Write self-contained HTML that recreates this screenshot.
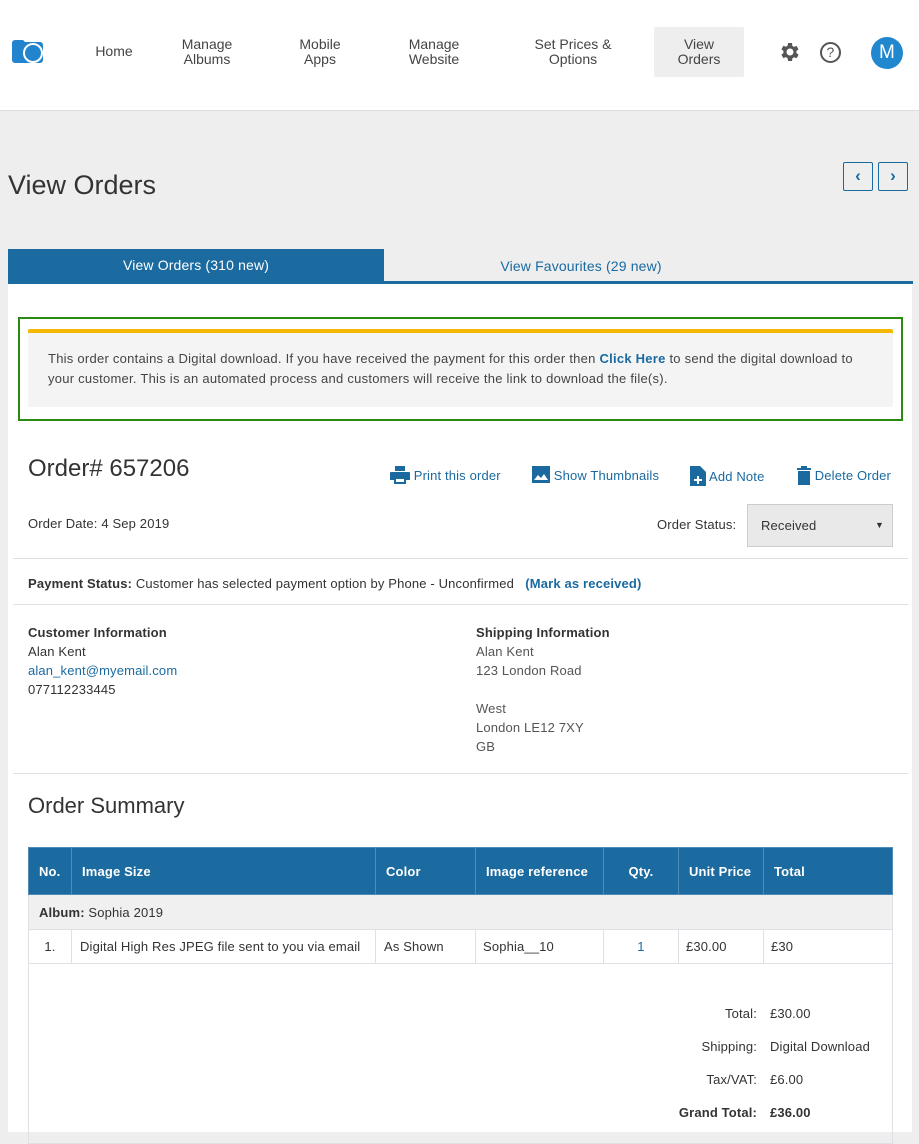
<!DOCTYPE html>
<html><head><meta charset="utf-8">
<style>
*{box-sizing:border-box;margin:0;padding:0}
body{width:919px;height:1132px;overflow:hidden;background:#eeeeee;font-family:"Liberation Sans",sans-serif;color:#333;font-size:13px;position:relative;letter-spacing:0.15px}
.a{position:absolute}
.hdr{left:0;top:0;width:919px;height:111px;background:#fff;border-bottom:1px solid #ddd}
.nav{font-size:14px;color:#444;text-align:center;line-height:15px;letter-spacing:0}
.blue{color:#1a6aa0}
.line{height:1px;background:#e0e0e0;left:13px;width:895px}
table{border-collapse:collapse}
td,th{border:1px solid #dde1e6;font-size:13px;text-align:left;padding:0 10px}
th{background:#1b6aa0;color:#fff;font-weight:bold;border-color:#4f8cb8}
</style></head><body>
<div class="a hdr">
  <svg class="a" style="left:12px;top:38px" width="32" height="26" viewBox="0 0 32 26"><path d="M3 2h8l2 2h15a3 3 0 0 1 3 3v15a3 3 0 0 1-3 3H3a3 3 0 0 1-3-3V5a3 3 0 0 1 3-3z" fill="#2184cd"/><circle cx="21" cy="15" r="9" fill="#2184cd" stroke="#fff" stroke-width="2"/></svg>
  <div class="a nav" style="left:86px;top:44px;width:56px">Home</div>
  <div class="a nav" style="left:170px;top:37px;width:74px">Manage<br>Albums</div>
  <div class="a nav" style="left:285px;top:37px;width:70px">Mobile<br>Apps</div>
  <div class="a nav" style="left:396px;top:37px;width:76px">Manage<br>Website</div>
  <div class="a nav" style="left:520px;top:37px;width:106px">Set Prices &amp;<br>Options</div>
  <div class="a nav" style="left:654px;top:27px;width:90px;height:50px;background:#eee;border-radius:2px;padding-top:10px">View<br>Orders</div>
  <svg class="a" style="left:777px;top:40px" width="24" height="24" viewBox="0 0 24 24"><path fill="#555" d="M19.4 13a7.5 7.5 0 0 0 0-2l2.1-1.6-2-3.5-2.5 1a7 7 0 0 0-1.7-1L15 3h-4l-.4 2.7a7 7 0 0 0-1.7 1l-2.5-1-2 3.5L6.5 11a7.5 7.5 0 0 0 0 2l-2.1 1.6 2 3.5 2.5-1a7 7 0 0 0 1.7 1L11 21h4l.4-2.7a7 7 0 0 0 1.7-1l2.5 1 2-3.5zM13 15.5a3.5 3.5 0 1 1 0-7 3.5 3.5 0 0 1 0 7z"/></svg>
  <div class="a" style="left:820px;top:42px;width:21px;height:21px;border:2px solid #555;border-radius:50%;text-align:center;font-size:14px;line-height:17px;color:#555">?</div>
  <div class="a" style="left:871px;top:37px;width:32px;height:32px;border-radius:50%;background:#2187cf;color:#fff;text-align:center;line-height:32px;font-size:19px">M</div>
</div>
<div class="a" style="left:8px;top:170px;font-size:27px;color:#333;letter-spacing:0">View Orders</div>
<div class="a" style="left:843px;top:162px;width:30px;height:29px;border:1px solid #1a6aa0;border-radius:2px;text-align:center;line-height:26px;color:#1a6aa0;font-size:17px;font-weight:bold">‹</div>
<div class="a" style="left:878px;top:162px;width:30px;height:29px;border:1px solid #1a6aa0;border-radius:2px;text-align:center;line-height:26px;color:#1a6aa0;font-size:17px;font-weight:bold">›</div>
<div class="a" style="left:8px;top:249px;width:376px;height:32px;background:#1b6aa0;color:#fff;text-align:center;line-height:33px;font-size:14px">View Orders (310 new)</div>
<div class="a blue" style="left:384px;top:249px;width:394px;height:32px;text-align:center;line-height:34px;font-size:14px">View Favourites (29 new)</div>
<div class="a" style="left:8px;top:281px;width:905px;height:3px;background:#1b6aa0"></div>
<div class="a" style="left:8px;top:284px;width:904px;height:848px;background:#fff"></div>
<div class="a" style="left:18px;top:317px;width:885px;height:104px;border:2px solid #2a8a12"></div>
<div class="a" style="left:28px;top:329px;width:865px;height:78px;background:#f4f4f4;border-top:4px solid #f5b800;border-radius:2px;padding:16px 20px;line-height:20px;font-size:13px;color:#444;letter-spacing:0.25px">This order contains a Digital download. If you have received the payment for this order then <b class="blue">Click Here</b> to send the digital download to your customer. This is an automated process and customers will receive the link to download the file(s).</div>
<div class="a" style="left:28px;top:455px;font-size:24px;color:#333;letter-spacing:0">Order# 657206</div>
<div class="a blue" style="left:390px;top:466px;font-size:13px"><svg width="20" height="18" viewBox="0 0 20 18" style="vertical-align:-4px"><path fill="#1a6aa0" d="M5 0h10v5H5zM1 6h18a1 1 0 0 1 1 1v7h-4v4H4v-4H0V7a1 1 0 0 1 1-1zm5 7v3h8v-3z"/></svg> Print this order</div>
<div class="a blue" style="left:532px;top:466px;font-size:13px"><svg width="18" height="17" viewBox="0 0 18 17" style="vertical-align:-3px"><rect width="18" height="17" fill="#1a6aa0"/><path fill="#fff" d="M2 14l4-5 3 3 3-4 4 6z"/></svg> Show Thumbnails</div>
<div class="a blue" style="left:690px;top:466px;font-size:13px"><svg width="16" height="20" viewBox="0 0 16 20" style="vertical-align:-5px"><path fill="#1a6aa0" d="M0 0h10l6 6v14H0z"/><path fill="#fff" d="M7 10h2v3h3v2H9v3H7v-3H4v-2h3z"/></svg> Add Note</div>
<div class="a blue" style="left:797px;top:466px;font-size:13px"><svg width="14" height="19" viewBox="0 0 14 19" style="vertical-align:-5px"><path fill="#1a6aa0" d="M4 0h6v2h4v2H0V2h4zM1 5h12v14H1z"/></svg> Delete Order</div>
<div class="a" style="left:28px;top:516px">Order Date: 4 Sep 2019</div>
<div class="a" style="left:657px;top:517px">Order Status:</div>
<div class="a" style="left:747px;top:504px;width:146px;height:43px;background:#e9e9e9;border:1px solid #ccc;padding-left:13px;line-height:41px">Received<span style="position:absolute;right:8px;font-size:9px">▼</span></div>
<div class="a line" style="top:558px"></div>
<div class="a" style="left:28px;top:576px;letter-spacing:0.15px"><b>Payment Status:</b> Customer has selected payment option by Phone - Unconfirmed &nbsp;&nbsp;<b class="blue">(Mark as received)</b></div>
<div class="a line" style="top:604px"></div>
<div class="a" style="left:28px;top:623px;line-height:19px"><b>Customer Information</b><br>Alan Kent<br><span class="blue">alan_kent@myemail.com</span><br>077112233445</div>
<div class="a" style="left:476px;top:623px;line-height:19px;color:#555"><b style="color:#333">Shipping Information</b><br>Alan Kent<br>123 London Road<br><br>West<br>London LE12 7XY<br>GB</div>
<div class="a line" style="top:773px"></div>
<div class="a" style="left:28px;top:793px;font-size:22px;letter-spacing:0">Order Summary</div>
<table class="a" style="left:28px;top:847px;width:865px">
<tr style="height:47px"><th style="width:43px">No.</th><th style="width:304px">Image Size</th><th style="width:100px">Color</th><th style="width:128px">Image reference</th><th style="width:75px;text-align:center">Qty.</th><th style="width:85px">Unit Price</th><th>Total</th></tr>
<tr style="height:35px;background:#f0f0f0"><td colspan="7"><b>Album:</b> Sophia 2019</td></tr>
<tr style="height:34px"><td style="text-align:center">1.</td><td style="padding-left:8px">Digital High Res JPEG file sent to you via email</td><td style="padding-left:8px">As Shown</td><td style="padding-left:7px">Sophia__10</td><td style="text-align:center" class="blue">1</td><td style="padding-left:7px">£30.00</td><td style="padding-left:7px">£30</td></tr>
<tr style="height:180px"><td colspan="7" style="vertical-align:top;padding:0"></td></tr>
</table>
<div class="a" style="left:600px;top:997px;width:157px;text-align:right;line-height:33px">Total:<br>Shipping:<br>Tax/VAT:<br><b>Grand Total:</b></div>
<div class="a" style="left:770px;top:997px;line-height:33px">£30.00<br>Digital Download<br>£6.00<br><b>£36.00</b></div>
</body></html>
